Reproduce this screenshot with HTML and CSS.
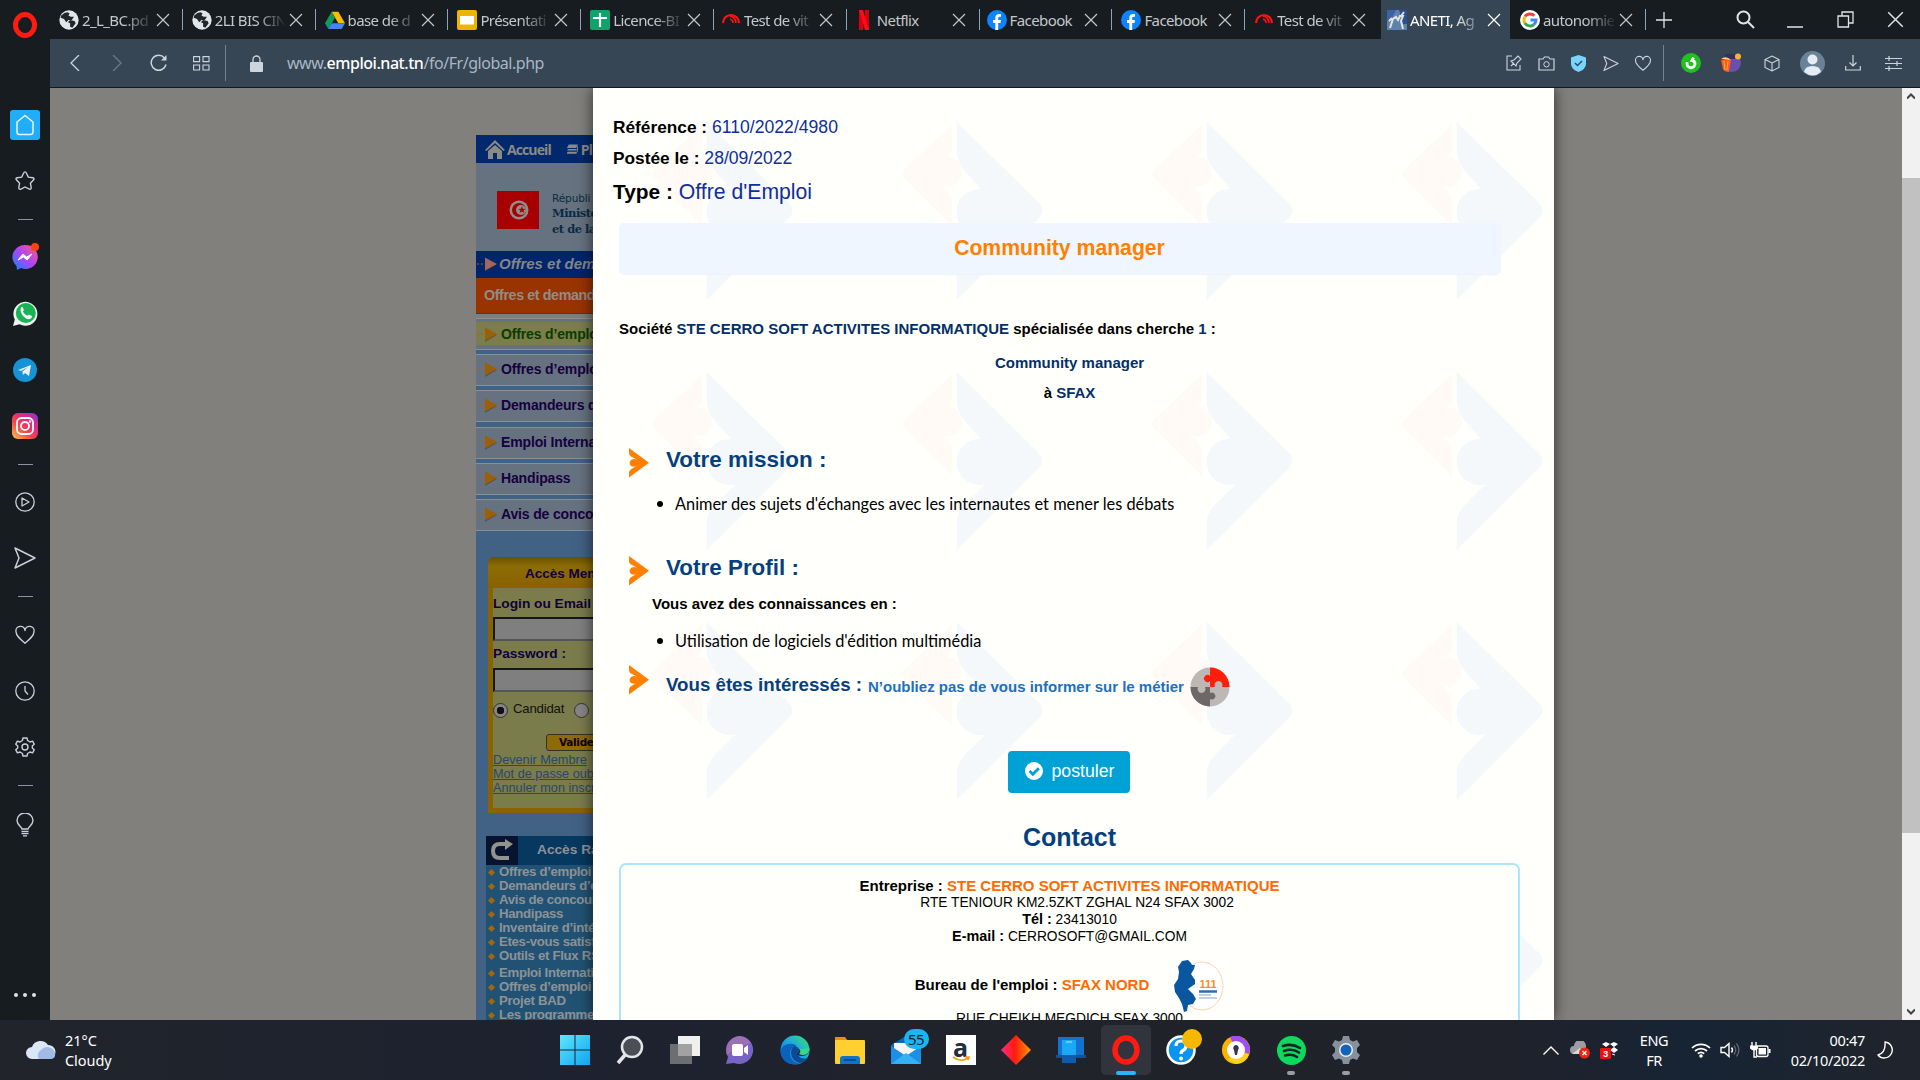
FILE: index.html
```html
<!DOCTYPE html>
<html lang="fr">
<head>
<meta charset="utf-8">
<title>ANETI</title>
<link rel="stylesheet" href="styles.css">
</head>
<body>
<svg class="defs" width="0" height="0">
  <defs>
    <symbol id="x" viewBox="0 0 14 14"><path d="M1 1l12 12M13 1L1 13" fill="none" stroke="currentColor" stroke-width="1.2"/></symbol>
    <symbol id="globe" viewBox="0 0 18 18"><circle cx="9" cy="9" r="8.7" fill="#e3e6e8"/><path d="M2 5q3-3 5.500-3l2 1-1 2 2 1 3 0-2 3-3 0-2 2-2-3-3-1zM10 9l4 1 1 2-3 4-2-1 0-3-2-1z" fill="#20262b"/></symbol>
    <symbol id="speed" viewBox="0 0 20 18"><path d="M2 14a8 8 0 1 1 16 0" fill="none" stroke="#f11" stroke-width="2.200" transform="translate(0 -2)"/><path d="M9 5a7 7 0 0 1 6 7M9 8a4 4 0 0 1 3 4" fill="none" stroke="#f11" stroke-width="1.600"/></symbol>
    <symbol id="fb" viewBox="0 0 20 20"><circle cx="10" cy="10" r="10" fill="#0a84ff"/><path d="M8.300 20v-7H6v-3h2.300V8c0-2.600 1.400-4 3.700-4l2 .2v2.500h-1.300c-1.200 0-1.500.7-1.500 1.500V10H14l-.5 3h-2.300v7z" fill="#fff"/></symbol>
    <symbol id="chev" viewBox="0 0 20 30"><path d="M0 0L20 14.700 0 29.500V24.500Q0 22.500 2 21.200L7 18.300Q2 19.500 .8 16.500 0 13.500 2.500 11.800 5 10.500 8 11.500L2 8.500Q0 7.500 0 5z" fill="#ff7f00"/></symbol>
    <symbol id="tri" viewBox="0 0 22 18"><path d="M1 9h2M5 9h2" stroke="#a5612a" stroke-width="1"/><path d="M9 4l12 6-12 7z" fill="#3c3c3c" opacity=".5"/><path d="M9 2.500l12 6.500-12 6.500z" fill="currentColor"/></symbol>
    <symbol id="send" viewBox="0 0 24 24"><path d="M2 2l20 10L2 22l4-10z" fill="none" stroke="currentColor" stroke-width="1.500" stroke-linejoin="round"/></symbol>
    <symbol id="heart" viewBox="0 0 24 22"><path d="M12 20C7 16 2 12 2 7a5 5 0 0 1 10-1 5 5 0 0 1 10 1c0 5-5 9-10 13z" fill="none" stroke="currentColor" stroke-width="1.500" stroke-linejoin="round"/></symbol>
    <linearGradient id="edge" x1="0" y1="1" x2="1" y2="0"><stop offset="0" stop-color="#0b5fc0"/><stop offset=".5" stop-color="#18a5e8"/><stop offset="1" stop-color="#3ee36b"/></linearGradient>
    <linearGradient id="msn" x1="0" y1="1" x2="1" y2="0"><stop offset="0" stop-color="#0a84ff"/><stop offset=".5" stop-color="#b044f5"/><stop offset="1" stop-color="#ff5c74"/></linearGradient>
    <linearGradient id="insta" x1="0" y1="1" x2=".9" y2="0"><stop offset="0" stop-color="#fdc84a"/><stop offset=".4" stop-color="#f5474a"/><stop offset=".7" stop-color="#e02a83"/><stop offset="1" stop-color="#8a3ac8"/></linearGradient>
    <linearGradient id="dia" x1="0" x2="1"><stop offset="0" stop-color="#ff2d8a"/><stop offset=".45" stop-color="#ff1a10"/><stop offset="1" stop-color="#ff9a00"/></linearGradient>
    <linearGradient id="win" x1="0" y1="0" x2="1" y2="1"><stop offset="0" stop-color="#5fe6ff"/><stop offset="1" stop-color="#0fa5f0"/></linearGradient>
  </defs>
</svg>

<div class="window">
  <nav class="sidebar">
    <div class="logo"><svg width="26" height="26" viewBox="0 0 26 26"><ellipse cx="13" cy="13" rx="9.500" ry="10.500" fill="none" stroke="#ff1b10" stroke-width="5"/></svg></div>
    <ul class="apps">
      <li><span class="home"><svg width="20" height="22" viewBox="0 0 20 22"><path d="M10 1.500L18 8v10q0 2.500-2.500 2.500h-11Q2 20.500 2 18V8z" fill="none" stroke="#e8f6ff" stroke-width="1.500" stroke-linejoin="round"/></svg></span></li>
      <li><svg width="22" height="22" viewBox="0 0 24 24"><path d="M12 2q1 0 1.600 1.500l2 4.300 5 .7q2 .5.800 2.200l-3.500 3.700.9 5q0 2-2 1.400L12 18.500 7.200 21q-2 .4-2-1.600l.9-5L2.600 10.700Q1.400 9 3.400 8.500l5-.7 2-4.300Q11 2 12 2z" fill="none" stroke="currentColor" stroke-width="1.500"/></svg></li>
      <li class="dash"></li>
      <li><svg width="28" height="28" viewBox="0 0 28 28"><path d="M14 2a12 12 0 1 1-4 23l-4 2-.5-4A12 12 0 0 1 14 2z" fill="url(#msn)"/><path d="M7 17l5-6 3.500 3 5.500-3-5 6-3.500-3z" fill="#fff" stroke="#fff"/><circle cx="24" cy="4" r="4" fill="#ff4112"/></svg></li>
      <li><svg width="27" height="27" viewBox="0 0 27 27"><path d="M1 26l1.800-6.500A12 12 0 1 1 7.500 24.300z" fill="#f2f2f0"/><circle cx="13.800" cy="13" r="10" fill="#17b354"/><path d="M9 7.500q1.500-1 2 .5l.8 2q-.1.900-1 1.500 1.700 3.200 4.500 4.300l1.500-1.300 3 1.500q.4 2.500-2.800 3.300C12 19 7 12 9 7.500z" fill="#fff"/></svg></li>
      <li><svg width="24" height="24" viewBox="0 0 24 24"><circle cx="12" cy="12" r="12" fill="#1593d6"/><path d="M5 12l13-5-2 11-4-3-2 2-.6-3.500L15 9l-7 4z" fill="#eee"/></svg></li>
      <li><svg width="26" height="26" viewBox="0 0 26 26"><rect width="26" height="26" rx="6" fill="url(#insta)"/><rect x="5" y="5" width="16" height="16" rx="4.500" fill="none" stroke="#fff" stroke-width="1.800"/><circle cx="13" cy="13" r="4" fill="none" stroke="#fff" stroke-width="1.800"/><circle cx="18" cy="8.500" r="1.200" fill="#fff"/></svg></li>
      <li class="dash"></li>
      <li><svg width="20" height="20" viewBox="0 0 20 20"><circle cx="10" cy="10" r="9.200" fill="none" stroke="currentColor" stroke-width="1.300"/><path d="M7 6l7 4-7 4z" fill="none" stroke="currentColor" stroke-width="1.300" stroke-linejoin="round"/></svg></li>
      <li><svg width="24" height="24"><use href="#send"/></svg></li>
      <li class="dash"></li>
      <li><svg width="22" height="20"><use href="#heart"/></svg></li>
      <li><svg width="20" height="20" viewBox="0 0 20 20"><circle cx="10" cy="10" r="9.200" fill="none" stroke="currentColor" stroke-width="1.300"/><path d="M10 5v5l3 3.500" fill="none" stroke="currentColor" stroke-width="1.300"/></svg></li>
      <li><svg width="20" height="22" viewBox="0 0 20 22"><path d="M8 2h4l.6 2.500L15 6l2.600-.8 1.600 3L17.300 10v2l1.900 1.800-1.600 3L15 16l-2.400 1.500L12 20H8l-.6-2.500L5 16l-2.600.8-1.600-3L2.700 12v-2L.8 8.200l1.600-3L5 6l2.400-1.500z" fill="none" stroke="currentColor" stroke-width="1.400" stroke-linejoin="round"/><circle cx="10" cy="11" r="3" fill="none" stroke="currentColor" stroke-width="1.400"/></svg></li>
      <li class="dash"></li>
      <li><svg width="18" height="24" viewBox="0 0 18 24"><path d="M6 16c0-2-5-4-5-8.500a8 7.500 0 0 1 16 0C17 12 12 14 12 16z" fill="none" stroke="currentColor" stroke-width="1.400"/><path d="M5.500 18.500h7M5.500 20.700h7M7 22.900h4" stroke="currentColor" stroke-width="1.300"/></svg></li>
    </ul>
    <div class="dots"><i></i><i></i><i></i></div>
  </nav>

  <div class="main">
    <header class="tabs">
      <div class="tab"><svg class="fav"><use href="#globe"/></svg><span class="t">2_L_BC.pd</span><svg class="x"><use href="#x"/></svg></div>
      <div class="tab"><svg class="fav"><use href="#globe"/></svg><span class="t">2LI BIS CIN</span><svg class="x"><use href="#x"/></svg></div>
      <div class="tab"><svg class="fav" viewBox="0 0 18 18"><path d="M6 1.500h6L18 12h-6z" fill="#fbbc04"/><path d="M6 1.500L9 7 3 17 0 12z" fill="#0f9d58"/><path d="M6 12h12l-3 5H3z" fill="#4285f4"/></svg><span class="t">base de d</span><svg class="x"><use href="#x"/></svg></div>
      <div class="tab"><svg class="fav" viewBox="0 0 20 20"><rect width="20" height="20" rx="2" fill="#f0b400"/><rect x="3" y="6" width="14" height="8.500" fill="#fff"/></svg><span class="t">Présentati</span><svg class="x"><use href="#x"/></svg></div>
      <div class="tab"><svg class="fav" viewBox="0 0 20 20"><rect width="20" height="20" rx="2" fill="#0fa36b"/><path d="M10 3v14M3 8h14" stroke="#fff" stroke-width="2.200"/></svg><span class="t">Licence-BI</span><svg class="x"><use href="#x"/></svg></div>
      <div class="tab near"><svg class="fav"><use href="#speed"/></svg><span class="t">Test de vit</span><svg class="x"><use href="#x"/></svg></div>
      <div class="tab near"><svg class="fav" viewBox="0 0 18 20"><path d="M4 0h4v20H4zM10 0h4v20h-4z" fill="#d8000f"/><path d="M4 0h4l6 20h-4z" fill="#ff0a16"/></svg><span class="t solid">Netflix</span><svg class="x"><use href="#x"/></svg></div>
      <div class="tab near"><svg class="fav"><use href="#fb"/></svg><span class="t solid">Facebook</span><svg class="x"><use href="#x"/></svg></div>
      <div class="tab"><svg class="fav"><use href="#fb"/></svg><span class="t solid">Facebook</span><svg class="x"><use href="#x"/></svg></div>
      <div class="tab wide"><svg class="fav"><use href="#speed"/></svg><span class="t">Test de vit</span><svg class="x"><use href="#x"/></svg></div>
      <div class="tab active"><svg class="fav" viewBox="0 0 20 20"><rect width="20" height="20" fill="#5b83ad"/><path d="M0 0h9l-4 8-5 3z" fill="#3a63a4"/><path d="M12 0h8v14h-4z" fill="#2a5092"/><path d="M3 18l3-9 3-2 2 3 2-4 3 0-2 5 2 8M5 8l-3 3M14 6l3-4" stroke="#e5e3dc" stroke-width="2" fill="none"/></svg><span class="t">ANETI, Ag</span><svg class="x"><use href="#x"/></svg></div>
      <div class="tab last"><svg class="fav" viewBox="0 0 20 20"><circle cx="10" cy="10" r="10" fill="#fff"/><g fill="none" stroke-width="3"><path d="M5 6.500A6 6 0 0 1 14.300 5.800" stroke="#ea4335"/><path d="M4.800 13A6 6 0 0 1 5 6.800" stroke="#fbbc05"/><path d="M13.800 14.700A6 6 0 0 1 4.900 13" stroke="#34a853"/><path d="M10.500 10H16q0 3-2.300 4.800" stroke="#4285f4"/></g></svg><span class="t">autonomie</span><svg class="x"><use href="#x"/></svg></div>
      <div class="controls">
        <svg width="16" height="16" viewBox="0 0 16 16"><path d="M8 0v16M0 8h16" stroke="currentColor" stroke-width="1.300"/></svg>
        <svg class="find" width="19" height="19" viewBox="0 0 19 19"><circle cx="7.500" cy="7.500" r="6" fill="none" stroke="currentColor" stroke-width="2"/><path d="M12 12l6 6" stroke="currentColor" stroke-width="2"/></svg>
        <svg class="min" width="16" height="16" viewBox="0 0 16 16"><path d="M0 15h16" stroke="currentColor" stroke-width="1.500"/></svg>
        <svg width="17" height="17" viewBox="0 0 17 17"><path d="M1 5h10.500v11H1zM5 5V1h11v11h-4.500" fill="none" stroke="currentColor" stroke-width="1.300"/></svg>
        <svg width="17" height="17"><use href="#x"/></svg>
      </div>
    </header>

    <div class="toolbar">
      <svg class="b1" width="10" height="16" viewBox="0 0 10 16"><path d="M9 0L1 8l8 8" fill="none" stroke="currentColor" stroke-width="1.300"/></svg>
      <svg class="b2" width="10" height="16" viewBox="0 0 10 16"><path d="M1 0l8 8-8 8" fill="none" stroke="#6b7986" stroke-width="1.300"/></svg>
      <svg class="b3" width="18" height="18" viewBox="0 0 18 18"><path d="M16 10.500A7.500 7.500 0 1 1 14.500 4" fill="none" stroke="currentColor" stroke-width="1.500"/><path d="M16.500 1v5.500H11z" fill="currentColor"/></svg>
      <svg class="b4" width="17" height="15" viewBox="0 0 17 15"><path d="M.6.600h6v5h-6zM10 .6h6v5h-6zM.6 9h6v5h-6zM10 9h6v5h-6z" fill="none" stroke="currentColor" stroke-width="1.100"/></svg>
      <i class="bar"></i>
      <svg class="lock" width="13" height="17" viewBox="0 0 13 17"><path d="M3 8V4.500a3.500 3.500 0 0 1 7 0V8" fill="none" stroke="currentColor" stroke-width="1.300"/><rect y="7" width="13" height="10" rx="1" fill="currentColor"/></svg>
      <span class="url">www.<b>emploi.nat.tn</b>/fo/Fr/global.php</span>
      <div class="tools">
        <span><svg width="16" height="16" viewBox="0 0 16 16"><path d="M6 1H1v14h13V10M5 11l3-3M5 6l5 5 1-3 4-4-3-3-4 4z" fill="none" stroke="currentColor" stroke-width="1.100"/></svg></span>
        <span><svg width="17" height="15" viewBox="0 0 17 15"><path d="M1 3h4l1.500-2h4L12 3h4v11H1z" fill="none" stroke="currentColor" stroke-width="1.200"/><circle cx="8.500" cy="8.300" r="2.700" fill="none" stroke="currentColor"/></svg></span>
        <span><svg width="15" height="17" viewBox="0 0 15 17"><path d="M7.500 0L15 2.500V9q0 5-7.500 8Q0 14 0 9V2.500z" fill="#79d3ff"/><path d="M4 8l2.500 2.500L11 6" fill="none" stroke="#2d4a60" stroke-width="1.500"/></svg></span>
        <span><svg width="18" height="17"><use href="#send"/></svg></span>
        <span><svg width="18" height="17"><use href="#heart"/></svg></span>
        <i class="bar"></i>
        <span class="w"><svg width="20" height="20" viewBox="0 0 20 20"><circle cx="10" cy="10" r="10" fill="#1fc11f"/><path d="M6 9v1.500a4 4 0 0 0 8 .5q0-3-3-3.500l1.500-3" fill="none" stroke="#fff" stroke-width="2.800"/></svg></span>
        <span class="w"><svg width="20" height="20" viewBox="0 0 20 20"><circle cx="11" cy="10" r="9" fill="#6a4fb0"/><rect x="4" y="1" width="10" height="5" fill="#34305c"/><path d="M0 7h10l-2 12q-5 0-6-3z" fill="#ff5a2a"/><path d="M3 8l1 9M7 8l-1 9" stroke="#ffb02e"/><circle cx="17" cy="3.500" r="3" fill="#ffb02e"/><path d="M0 6q5-4 10 1z" fill="#ffd27a"/></svg></span>
        <span class="w"><svg width="16" height="17" viewBox="0 0 16 17"><path d="M8 1l7 3.500v8L8 16l-7-3.500v-8zM1 4.500L8 8l7-3.500M8 8v8" fill="none" stroke="currentColor" stroke-width="1.100"/></svg></span>
        <span class="w"><svg width="25" height="25" viewBox="0 0 25 25"><circle cx="12.500" cy="12.500" r="12.500" fill="#6b8296"/><circle cx="12.500" cy="8.500" r="5" fill="#e4ecf5"/><path d="M4 21q1-6 8.500-6t8.500 6q-8 7-17 0z" fill="#e4ecf5"/></svg></span>
        <span class="w"><svg width="16" height="16" viewBox="0 0 16 16"><path d="M8 0v11M4.500 7.500L8 11l3.500-3.500M.7 11v4h14.600v-4" fill="none" stroke="currentColor" stroke-width="1.200"/></svg></span>
        <span class="w"><svg width="17" height="15" viewBox="0 0 17 15"><path d="M0 2.500h17M0 7.500h17M0 12.500h17M4 0v5M12 5v5M4 10v5" fill="none" stroke="currentColor" stroke-width="1.200"/></svg></span>
      </div>
    </div>

    <div class="view">
      <aside class="site">
        <div class="topnav"><svg width="20" height="19" viewBox="0 0 20 19"><path d="M0 10L10 0l10 10-1.500 1L10 3 1.500 11zM3 11l7-6 7 6v8h-5v-6H8v6H3z" fill="#8b8b86"/></svg><b>Accueil</b><svg class="stack" width="12" height="13" viewBox="0 0 13 13"><path d="M3 1h10l-2 4H1zM2 6h9.500v1.500H1.500zM1.500 9H11v2H1z" fill="#8b8b86"/><path d="M12.500 3v5l-1.500 3" fill="none" stroke="#8b8b86"/></svg><b>Pl</b></div>
        <div class="gov">
          <svg width="42" height="38" viewBox="0 0 42 38"><rect width="42" height="38" fill="#a80000"/><circle cx="22" cy="19" r="9.500" fill="#8e8e8a"/><circle cx="22" cy="19" r="7" fill="#a80000"/><circle cx="24" cy="19" r="5" fill="#8e8e8a"/><path d="M25 15l.8 2.700 2.700.2-2 1.500.7 2.700-2.300-1.500-2.200 1.500.7-2.700-2-1.500 2.600-.2z" fill="#a80000"/></svg>
          <p><span>Républi</span><b>Ministe</b><b>et de la</b></p>
        </div>
        <div class="ticker"><svg width="22" height="18"><use href="#tri"/></svg><i>Offres et dem</i></div>
        <div class="section">Offres et demand</div>
        <ul class="menu">
          <li class="on"><span><svg width="22" height="18"><use href="#tri"/></svg>Offres d’emplo</span></li>
          <li><span><svg width="22" height="18"><use href="#tri"/></svg>Offres d’emplo</span></li>
          <li><span><svg width="22" height="18"><use href="#tri"/></svg>Demandeurs d</span></li>
          <li><span><svg width="22" height="18"><use href="#tri"/></svg>Emploi Interna</span></li>
          <li><span><svg width="22" height="18"><use href="#tri"/></svg>Handipass</span></li>
          <li><span><svg width="22" height="18"><use href="#tri"/></svg>Avis de conco</span></li>
        </ul>
        <form class="login">
          <h4>Accès Mem</h4>
          <label>Login ou Email</label><div class="field"></div>
          <label>Password :</label><div class="field"></div>
          <div class="radios"><i class="radio on"></i><span>Candidat</span><i class="radio"></i></div>
          <div class="valid">Valide</div>
          <a>Devenir Membre</a><a>Mot de passe oub</a><a>Annuler mon inscr</a>
        </form>
        <section class="quick">
          <h4><svg width="32" height="29" viewBox="0 0 32 29"><rect width="32" height="29" fill="#08142f"/><path d="M22 8h-8q-7 0-7 7t7 7h9" fill="none" stroke="#92938c" stroke-width="4"/><path d="M19 3l8 5-8 6z" fill="#92938c"/></svg><span>Accès Ra</span></h4>
          <ul>
            <li>Offres d’emploi</li><li>Demandeurs d’e</li><li>Avis de concour</li><li>Handipass</li><li>Inventaire d’inté</li><li>Etes-vous satisf</li><li>Outils et Flux RS</li><li class="gap">Emploi Internati</li><li>Offres d’emploi</li><li>Projet BAD</li><li>Les programme</li>
          </ul>
        </section>
      </aside>

      <article class="modal">
        <p class="meta ref"><b>Référence :</b> <span>6110/2022/4980</span></p>
        <p class="meta date"><b>Postée le :</b> <span>28/09/2022</span></p>
        <p class="meta type"><b>Type :</b> <span>Offre d'Emploi</span></p>
        <h1>Community manager</h1>
        <p class="line company">Société <em>STE CERRO SOFT ACTIVITES INFORMATIQUE</em> spécialisée dans cherche <em>1</em> :</p>
        <p class="line job"><em>Community manager</em></p>
        <p class="line city">à <em>SFAX</em></p>
        <h2 class="mission"><svg width="20" height="30"><use href="#chev"/></svg><span>Votre mission :</span></h2>
        <p class="item i1">Animer des sujets d'échanges avec les internautes et mener les débats</p>
        <h2 class="profil"><svg width="20" height="30"><use href="#chev"/></svg><span>Votre Profil :</span></h2>
        <p class="line know">Vous avez des connaissances en :</p>
        <p class="item i2">Utilisation de logiciels d'édition multimédia</p>
        <h3><svg class="c" width="20" height="30"><use href="#chev"/></svg><span>Vous êtes intéressés :</span><small>N’oubliez pas de vous informer sur le métier</small>
          <svg width="40" height="40" viewBox="0 0 40 40"><circle cx="20" cy="20" r="19.500" fill="#bdb7b6"/><path d="M20 .5A19.500 19.500 0 0 1 39.500 20H32a4 4 0 1 0-7 0h-5v-6a3.500 3.500 0 1 1 0-5z" fill="#ff1e0a"/><path d="M.5 20A19.500 19.500 0 0 0 20 39.500V32a3.500 3.500 0 1 0 0-6v-6h-5a4 4 0 1 1-7 0z" fill="#6b6867"/></svg></h3>
        <div class="btnrow"><div class="btn"><svg width="18" height="18" viewBox="0 0 18 18"><circle cx="9" cy="9" r="9" fill="#fff"/><path d="M4.500 9l3.300 3.300 6-6" fill="none" stroke="#00a2d6" stroke-width="2.800"/></svg>postuler</div></div>
        <h2 class="contact">Contact</h2>
        <section class="card">
          <p class="ent"><b>Entreprise : <em>STE CERRO SOFT ACTIVITES INFORMATIQUE</em></b></p>
          <p class="addr">RTE TENIOUR KM2.5ZKT ZGHAL N24 SFAX 3002</p>
          <p class="tel"><b>Tél :</b> 23413010</p>
          <p class="mail"><b>E-mail :</b> CERROSOFT@GMAIL.COM</p>
          <div class="office"><b>Bureau de l'emploi : <em>SFAX NORD</em></b>
            <svg width="50" height="52" viewBox="0 0 50 52"><ellipse cx="28" cy="26" rx="21" ry="24" fill="#fff" stroke="#ffd3b0"/><path d="M8 1l6-1 3 3 1 2 3 0-1 4-3 5 4 6 0 4-7 5 5 5 3 5-3 5-5 1-1 6-3 1-2-8-3-6-4-6-1-7 4-6 1-7-1-5z" fill="#0a569f"/><text class="count" x="25.500" y="28">111</text><path d="M25 31.500h18" stroke="#2e6db0" stroke-width="2.500"/><path d="M25 35h12M25 38h18" stroke="#a9c4de" stroke-width="1.500"/></svg></div>
          <p class="rue">RUE CHEIKH MEGDICH SFAX 3000</p>
        </section>
      </article>

      <div class="scroll"><svg width="8" height="7" viewBox="0 0 8 7"><path d="M0 5.500l4-4 4 4" fill="none" stroke="#444" stroke-width="2"/></svg><i></i><svg width="8" height="7" viewBox="0 0 8 7"><path d="M0 1.500l4 4 4-4" fill="none" stroke="#444" stroke-width="2"/></svg></div>
    </div>
  </div>
</div>

<footer class="taskbar">
  <div class="weather"><svg width="32" height="22" viewBox="0 0 32 22"><path d="M7 20a6 6 0 0 1 0-12 9 9 0 0 1 16-2 7 7 0 0 1 1 14z" fill="#dde6f5"/><path d="M14 20a6 6 0 0 1 2-9 8 8 0 0 1 14 3q1 6-5 6z" fill="#9fbbe6"/></svg><p>21°C<br>Cloudy</p></div>
  <div class="icons">
    <span><svg width="30" height="30" viewBox="0 0 30 30"><path d="M0 0h14.500v14.500H0zM15.500 0H30v14.500H15.500zM0 15.500h14.500V30H0zM15.500 15.500H30V30H15.500z" fill="url(#win)"/></svg></span>
    <span><svg width="28" height="30" viewBox="0 0 28 30"><circle cx="16" cy="12" r="10" fill="#4b4e54" stroke="#e3e5e8" stroke-width="2.500"/><path d="M9 20l-7 8" stroke="#e3e5e8" stroke-width="3.500"/></svg></span>
    <span><svg width="30" height="30" viewBox="0 0 30 30"><rect x="8" y="1" width="22" height="20" fill="#f0f0ee"/><rect y="9" width="22" height="20" fill="#888" opacity=".75"/></svg></span>
    <span><svg width="30" height="30" viewBox="0 0 30 30"><path d="M15 1a14 14 0 1 1-6 27l-8 1 2-7A14 14 0 0 1 15 1z" fill="#7864c4"/><path d="M15 1a14 14 0 0 0-13 19q9-8 24-12A14 14 0 0 0 15 1z" fill="#b47aa8" opacity=".6"/><rect x="7" y="9" width="11" height="12" rx="2" fill="#fff"/><path d="M19 13l4-3v10l-4-3z" fill="#fff"/></svg></span>
    <span><svg width="30" height="30" viewBox="0 0 30 30"><circle cx="15" cy="15" r="14.500" fill="url(#edge)"/><path d="M.5 17A10 9 0 0 1 17 11Q10 12 10 19 11 28 20 28.500 3 32 .5 17z" fill="#0b62bd"/><path d="M18 20q2-2 1.500-5-1-3-4.500-4-4 2-4 7 1 8 9 10 5-1 8-5-7 2-10-3z" fill="#0d4a96"/><path d="M17 19.500q2.500-2 2-5 6 1 10 2-1 3-4 4-5 1.500-8-1z" fill="#1a2238" opacity=".9"/><path d="M20 14q1 3-1 5 4 2 8 0 3-3 2.500-6z" fill="#35d98c"/></svg></span>
    <span><svg width="30" height="28" viewBox="0 0 30 28"><path d="M0 1h10l3 4h-13z" fill="#d99708"/><rect y="4" width="30" height="24" rx="1" fill="#ffd02f"/><path d="M5 28v-5q0-3 3-3h14q3 0 3 3v5z" fill="#1274c9"/><path d="M9 24h12" stroke="#0a4f92" stroke-width="2"/></svg></span>
    <span class="mailapp"><svg width="30" height="30" viewBox="0 0 30 30"><path d="M0 10L15 1l15 9v19H0z" fill="#0f67b4"/><path d="M3 8h24v8L15 24 3 16z" fill="#f2f4f6"/><path d="M0 11l15 10 15-10v18H0z" fill="#1c8fe6"/><path d="M0 29l15-11 15 11z" fill="#34b0f5"/></svg><em>55</em></span>
    <span><i class="amz">a<svg width="18" height="6" viewBox="0 0 18 6"><path d="M1 1q8 6 15 1M13 1l4 0-1 3" fill="none" stroke="#f90" stroke-width="1.600"/></svg></i></span>
    <span><svg width="30" height="30" viewBox="0 0 30 30"><path d="M15 0l15 15-15 15L0 15z" fill="url(#dia)"/></svg></span>
    <span><svg width="30" height="28" viewBox="0 0 30 28"><rect x="2" y="1" width="26" height="20" fill="#1272d0"/><path d="M0 19h30v3H0z" fill="#0a549e"/><rect x="6" y="4" width="14" height="23" rx="1" fill="#1ba8f4"/><path d="M6 19h14v8H6z" fill="#0d5cae"/><path d="M10 6h6" stroke="#bfeaff"/></svg></span>
    <span class="cur"><svg width="30" height="30" viewBox="0 0 30 30"><ellipse cx="15" cy="15" rx="11" ry="12" fill="none" stroke="#ff1b10" stroke-width="5.500"/></svg></span>
    <span class="help"><svg width="30" height="30" viewBox="0 0 30 30"><circle cx="15" cy="15" r="13.500" fill="#0a95f0" stroke="#fff" stroke-width="2.500"/><path d="M10 11q0-5 5-5t5 5q0 3-3 4.500-2 1-2 3.500" fill="none" stroke="#fff" stroke-width="3.200"/><circle cx="15" cy="23.500" r="2" fill="#fff"/></svg></span>
    <span><svg width="28" height="28" viewBox="0 0 28 28"><circle cx="14" cy="14" r="14" fill="#ffb300"/><path d="M8 1A14 14 0 0 1 27 18L14 14z" fill="#a04ff0"/><path d="M27 18A14 14 0 0 1 14 28l-8-4 8-8z" fill="#ffd21e"/><circle cx="14" cy="14" r="9" fill="#fff"/><path d="M14 9a3 3 0 0 1 2 5l-1 5h-2l-1-5a3 3 0 0 1 2-5z" fill="#30364f"/></svg></span>
    <span class="run"><svg width="29" height="29" viewBox="0 0 29 29"><circle cx="14.500" cy="14.500" r="14.500" fill="#0bda5c"/><path d="M6 10q9-3 17 2M7 15q8-3 15 1.500M8 19.500q7-2 12 1.500" fill="none" stroke="#14202a" stroke-width="2.600" stroke-linecap="round"/></svg></span>
    <span class="run"><svg width="30" height="30" viewBox="0 0 30 30"><path d="M12 1h6l1 4 3 1.500L26 5l3 5-3 3v4l3 3-3 5-4-1.500L19 25l-1 4h-6l-1-4-3-1.500L4 25l-3-5 3-3v-4l-3-3 3-5 4 1.500L11 5z" fill="#85919c"/><circle cx="15" cy="15" r="7" fill="#e9eef2"/><circle cx="15" cy="15" r="5.500" fill="#1563b8"/></svg></span>
  </div>
  <div class="tray">
    <svg class="up" width="16" height="9" viewBox="0 0 16 9"><path d="M.5 8.500L8 1l7.500 7.500" fill="none" stroke="currentColor" stroke-width="1.400"/></svg>
    <svg class="od" width="21" height="18" viewBox="0 0 21 18"><path d="M4 13a4 4 0 0 1 0-8 6 6 0 0 1 12 0v8z" fill="#9c9ea2"/><path d="M2 13l8-6 6 6z" fill="#d9dadc"/><circle cx="14.500" cy="12" r="5.500" fill="#f5220f"/><path d="M12.500 10l4 4M16.500 10l-4 4" stroke="#fff" stroke-width="1.400"/></svg>
    <svg class="db" width="19" height="19" viewBox="0 0 19 19"><path d="M6 1l4 2-4 3-4-3zM14 1l4 2-4 3-4-3zM14 6l4 3-4 3-4-3z" fill="#fff"/><path d="M12 13l3 1" stroke="#fff"/><rect y="7" width="11" height="11" rx="1" fill="#ee1010"/><text class="n" x="3" y="16">3</text></svg>
    <p class="lang">ENG<br>FR</p>
    <svg class="wifi" width="20" height="16" viewBox="0 0 20 16"><path d="M1 6a13 13 0 0 1 18 0M4 9a9 9 0 0 1 12 0M6.800 11.700a5 5 0 0 1 6.400 0" fill="none" stroke="currentColor" stroke-width="1.700"/><circle cx="10" cy="14" r="1.800" fill="currentColor"/></svg>
    <svg class="vol" width="20" height="16" viewBox="0 0 20 16"><path d="M1 5.500h3.500L9 1.500v13l-4.500-4H1z" fill="none" stroke="currentColor" stroke-width="1.400"/><path d="M11.500 5.500q2 2.500 0 5" fill="none" stroke="currentColor" stroke-width="1.400"/><path d="M14 3.500q3.500 4.500 0 9M16.500 1.500q5 6.500 0 13" fill="none" stroke="#5d6672" stroke-width="1.300"/></svg>
    <svg class="bat" width="21" height="16" viewBox="0 0 21 16"><path d="M2 0v4M6 0v4M4 7v8h3" fill="none" stroke="currentColor" stroke-width="1.400"/><path d="M0 3.500h8v3q-4 4-8 0z" fill="currentColor"/><rect x="6.500" y="4" width="11.500" height="10.500" rx="2" fill="none" stroke="currentColor" stroke-width="1.300"/><rect x="8.500" y="6" width="7.500" height="6.500" fill="currentColor"/><path d="M19.500 7v4" stroke="currentColor" stroke-width="2"/></svg>
    <p class="clock">00:47<br>02/10/2022</p>
    <svg class="moon" width="17" height="18" viewBox="0 0 17 18"><path d="M8 1a8 8 0 1 1-7 13q8-2 7-13z" fill="none" stroke="currentColor" stroke-width="1.400" stroke-linejoin="round"/></svg>
  </div>
</footer>
</body>
</html>
```
FILE: styles.css
```css
* { box-sizing: border-box; }
body { margin: 0; width: 1920px; height: 1080px; overflow: hidden; background: #171c20; font-family: "Liberation Sans", Arial, sans-serif; }
p, h1, h2, h3, h4, ul { margin: 0; padding: 0; }
ul { list-style: none; }
em { font-style: normal; }
svg { display: block; flex: none; }
.defs { height: 0; float: left; }

.window { display: grid; grid-template-columns: 50px 1870px; height: 1020px; }
.main { display: grid; grid-template-rows: 39px 49px 932px; min-width: 0; }

/* Sidebar */
.sidebar { display: flex; flex-direction: column; background: #171c20; color: #c9d0d6; }
.logo { height: 97px; padding: 12px 0 0 12px; }
.apps li { height: 56.200px; display: flex; align-items: center; justify-content: center; }
.apps .dash { height: 20px; }
.apps li:last-child { padding-top: 3px; }
.dash::before { content: ""; width: 15px; height: 1px; background: #8296a8; }
.home { width: 30px; height: 30px; border-radius: 3px; background: #20aefb; display: grid; place-items: center; }
.dots { margin: auto 0 23px; display: flex; gap: 5px; justify-content: center; }
.dots i { width: 4px; height: 4px; border-radius: 50%; background: #dfe3e6; }

/* Tabs */
.tabs { display: flex; background: #171c20; color: #c3c8cb; font: 15px "Noto Sans", sans-serif; }
.tab { width: 132.800px; flex: none; display: flex; align-items: center; padding: 0 13px 0 9px; background: linear-gradient(#8fa3b5, #8fa3b5) right top 9px / 1px 21px no-repeat; }
.tab.near { padding: 0 14px 0 7px; }
.tab.wide { width: 135.800px; background: none; padding-right: 15px; }
.tab.active { width: 129px; background: #364655; color: #fff; padding: 0 9px 0 6px; }
.tab.last { width: 136px; padding-left: 10px; }
.fav { width: 20px; height: 20px; }
.t { flex: 1; min-width: 0; margin: 0 5px 0 3px; letter-spacing: -.6px; white-space: nowrap; overflow: hidden; -webkit-mask-image: linear-gradient(90deg, #000 60%, rgba(0,0,0,.1)); mask-image: linear-gradient(90deg, #000 60%, rgba(0,0,0,.1)); }
.t.solid { -webkit-mask-image: none; mask-image: none; margin-right: 2px; }
.x { width: 14px; height: 14px; }
.controls { display: flex; align-items: center; padding-left: 10px; color: #e1e4e6; }
.find { margin: 0 32px 0 64px; }
.min { margin-right: 34px; }
.controls svg:nth-child(4) { margin-right: 33px; }

/* Address bar */
.toolbar { display: flex; align-items: center; background: #364655; border-bottom: 1px solid #14181c; color: #cdd5dc; padding-left: 20px; }
.b2 { margin-left: 32px; }
.b3 { margin-left: 28px; }
.b4 { margin-left: 25px; }
.bar { width: 1px; height: 36px; background: #74828e; }
.toolbar > .bar { margin-left: 15px; }
.lock { margin-left: 24px; }
.url { margin-left: 24px; font: 16px "Noto Sans", sans-serif; letter-spacing: -.46px; color: #a9b7c4; }
.url b { font-weight: 500; color: #fff; }
.tools { margin-left: auto; display: flex; align-items: center; padding-right: 6px; }
.tools span { width: 32.300px; display: grid; place-items: center; }
.tools .w { width: 40.600px; }
.tools .bar { margin: 0 6px 0 4px; }

/* Web page */
.view { display: grid; grid-template-columns: 426px 117px 961px 348px 18px; background: #81807d; overflow: hidden; }
.site { grid-column: 2; margin-top: 47px; overflow: hidden; background: #416185; white-space: nowrap; height: 885px; }
.topnav { display: flex; align-items: center; height: 28px; padding-left: 9px; background: #01286c; color: #8b8b86; font-size: 14px; }
.topnav b { margin-left: 2px; font: bold 14px "Open Sans", sans-serif; letter-spacing: -.9px; }
.topnav .stack { margin-left: 15px; }
.topnav .stack + b { margin-left: 3px; }
.gov { display: flex; height: 88px; background: #66727f; padding: 28px 0 0 21px; }
.gov p { margin-left: 13px; font-family: "DejaVu Serif", serif; font-size: 11.500px; line-height: 16px; letter-spacing: -.5px; color: #0b2b45; }
.gov span { display: block; font: 10.500px/14px "DejaVu Sans", sans-serif; letter-spacing: -.1px; }
.gov b { display: block; }
.ticker { display: flex; align-items: center; height: 27px; padding-bottom: 2px; background: #00256b; color: #a0675c; font-weight: bold; font-size: 15px; }
.ticker i { color: #83858e; margin-left: 1px; }
.section { height: 36px; line-height: 35px; padding-left: 8px; background: #993300; border-bottom: 1px solid #1c4670; color: #8f8e89; font-weight: bold; font-size: 14.300px; letter-spacing: -.4px; }
.menu { border-top: 4px solid #7b7f80; }
.menu li { height: 36.200px; padding: 0 0 5px; background: linear-gradient(#8a9094, #8a9094) 0 0 / 100% 1px no-repeat, linear-gradient(#8a9094, #8a9094) 0 31px / 100% 1px no-repeat, linear-gradient(#66727f, #66727f) 0 0 / 100% 31px no-repeat; color: #170040; font-weight: bold; font-size: 14px; letter-spacing: -.15px; }
.menu span { display: flex; align-items: center; height: 30px; }
.menu svg { margin-right: 3px; color: #9c5f06; }
.menu .on { padding-top: .1px; }
.menu .on span { height: 23px; margin-top: 4px; background: #7b7d4b; color: #0a3c00; }
.login { display: block; margin: 22px -20px 0 12px; height: 256px; border: 5px solid #8a6300; border-top: 0; border-radius: 7px 0 0 0; background: #7a7c4c; color: #12003c; }
.login h4 { height: 31px; line-height: 33px; margin-left: -5px; padding-left: 37px; border-radius: 6px 0 0 0; background: linear-gradient(#6b5000, #8b6c05 30%, #8a6200); font-size: 13.500px; }
.login label { display: block; height: 29px; line-height: 31px; font-weight: bold; font-size: 13.700px; }
.field { height: 24px; border: 2px solid #15151a; border-bottom-color: #555; background: #7f7f7f; }
.field + label { height: 27px; line-height: 26px; }
.radios { display: flex; align-items: center; height: 37px; font-size: 13.200px; letter-spacing: -.2px; color: #111; }
.radios span { width: 61px; margin-left: 5px; margin-top: -4px; }
.radio { flex: none; width: 15px; height: 15px; border: 1px solid #333; border-radius: 50%; background: #858585; }
.radio.on { background: radial-gradient(#111 3.500px, #858585 4px); }
.valid { width: 90px; height: 17px; margin: 5px 0 2px 53px; padding-left: 12px; border: 1px solid #332; border-radius: 3px; background: #8d6c05; color: #100; font: bold 10.500px/15px "DejaVu Sans", sans-serif; letter-spacing: -.3px; }
.login a { display: block; height: 14px; line-height: 14px; font-size: 12.700px; text-decoration: underline; color: #2c4669; }
.quick { margin: 23px -10px 0 10px; background: #215274; height: 190px; color: #8d9296; font-weight: bold; }
.quick h4 { display: flex; height: 29px; line-height: 28px; background: #073860; font-size: 13.700px; }
.quick h4 span { margin-left: 19px; }
.quick ul { margin-top: -1px; }
.quick li { display: flex; align-items: center; height: 14px; font-size: 13.200px; letter-spacing: -.3px; }
.quick li::before { content: ""; flex: none; width: 5px; height: 5px; margin: 3px 5px 0 3px; transform: rotate(45deg); background: #a2660d; }
.quick .gap { margin-top: 3px; }

/* Offer dialog */
.modal { position: relative; height: 932px; padding: 29px 34px 0 20px; clip-path: inset(0 -20px 0 -20px); box-shadow: 0 0 14px rgba(0,0,0,.65);
  background: #fffffb url("data:image/svg+xml,%3Csvg xmlns='http://www.w3.org/2000/svg' width='250' height='250'%3E%3Cpath d='M50 2V24Q50 33 42 37H37A15 15 0 1 1 40 64Q50 70 50 80V104L2 56Q-1 52 2 48Z' fill='%23fffaf5'/%3E%3Cpath d='M54.700 0L138 82Q143 89 138 95L54.700 178V150Q55 142 62 134L84 112A23 23 0 1 1 79 67L62 48Q54.700 39 54.700 28Z' fill='%23f4f8fb'/%3E%3C/svg%3E") 59px 34px; }
.meta { font-size: 17.600px; line-height: 20px; color: #000; white-space: nowrap; }
.meta span { color: #0f2f9c; }
.meta b { font-size: 17.300px; }
.date { margin-top: 11px; }
.type { font-size: 21.200px; line-height: 24px; margin-top: 12px; }
.type b { font-size: 20.900px; }
.modal h1 { margin: 19px 0 0 6px; width: 882px; height: 51px; line-height: 50px; padding-right: 1px; border-radius: 5px; background: #eff6ff; box-shadow: 0 1px 1px #eef2f4; text-align: center; font-size: 21.200px; color: #ff7f00; }
.line { margin-left: 6px; font-size: 15px; line-height: 20px; font-weight: bold; color: #000; white-space: nowrap; }
.line em { color: #042f68; }
.company { margin-top: 45px; }
.job, .city { text-align: center; }
.job { margin-top: 14px; }
.city { margin-top: 10px; }
.modal h2 { display: flex; height: 30px; line-height: 30px; font-size: 22.450px; color: #063f7f; padding-left: 16px; }
.modal h2 svg { margin: 3px 17px 0 0; }
.mission { margin-top: 42px; }
.item { display: flex; align-items: center; height: 20px; padding-left: 44px; font: 16.340px/20px Lato, sans-serif; color: #000; white-space: nowrap; }
.item::before { content: ""; width: 6px; height: 6px; border-radius: 50%; background: #000; margin-right: 12px; }
.i1 { margin-top: 19px; }
.profil { margin-top: 39px; }
.know { margin: 11px 0 0 39px; }
.i2 { margin-top: 17px; }
.modal h3 { display: flex; align-items: center; height: 44px; margin-top: 14px; padding-left: 16px; font-size: 18.700px; color: #063f7f; white-space: nowrap; }
.modal h3 .c { margin: -15px 17px 0 0; }
.modal h3 span { margin-top: -4px; }
.modal h3 small { margin: -2px 6px 0 6px; font-size: 15px; color: #1c6fc1; }
.btnrow { display: flex; justify-content: center; margin: 42px 0 0 4px; }
.btn { display: flex; align-items: center; gap: 9px; width: 122px; height: 42px; padding: 0 0 2px 17px; border-radius: 4px; background: #00a2d6; color: #fff; font-size: 17.700px; }
.modal .contact { display: block; margin-top: 29px; padding: 0 0 0 6px; text-align: center; font-size: 25px; }
.card { margin: 11px 0 0 6px; height: 180px; padding-top: 12px; border: 2px solid #a8e6f8; border-radius: 7px; background: #fffffb; text-align: center; font-size: 13.750px; line-height: 17px; color: #000; }
.card em { color: #ff6a00; }
.card b { font-size: 14.400px; }
.card .ent b, .card .office b { font-size: 15px; }
.card .addr { margin-top: -1px; padding-left: 15px; }
.count { font: bold 11px "Liberation Sans", sans-serif; fill: #ff8a20; }
.office { display: flex; justify-content: center; align-items: center; gap: 25px; margin-top: 15px; font-size: 15px; height: 51px; }
.office b { margin-top: -2px; }
.card .rue { margin-top: -1px; }

.scroll { grid-column: 5; display: flex; flex-direction: column; align-items: center; justify-content: space-between; background: #f1f1f1; padding: 5px 0; }
.scroll i { width: 18px; height: 655px; margin: 78px 0 auto; background: #c1c1c1; }

/* Taskbar */
.taskbar { display: flex; height: 60px; align-items: center; color: #fff; background: linear-gradient(90deg, #21242b, #1d2230 30%, #21232b 50%, #20222b 78%, #172434 88%, #20242c); font: 15px/20px "Noto Sans", sans-serif; }
.weather { display: flex; align-items: center; width: 550px; padding-left: 25px; gap: 8px; font-size: 14.500px; letter-spacing: -.05px; }
.weather p { margin-top: -1px; }
.icons { display: flex; }
.icons span { position: relative; width: 50px; height: 50px; margin-right: 5.100px; display: grid; place-items: center; }
.icons .cur { background: #31343d; border-radius: 5px; }
.cur::after, .run::after { content: ""; position: absolute; bottom: 0; width: 20px; height: 4px; border-radius: 2px; background: #27b6f8; }
.run::after { width: 8px; background: #9b9da2; }
.mailapp em { position: absolute; right: 2px; top: 4px; width: 25px; height: 20px; border-radius: 10px; background: #1cb4f4; color: #10222e; text-align: center; line-height: 20px; letter-spacing: -.5px; }
.help::after { content: ""; position: absolute; right: 4px; top: 4px; width: 20px; height: 20px; border-radius: 50%; background: #f6b900; }
.amz { width: 30px; height: 30px; background: #fff; color: #232f3e; font: bold 25px/18px "Open Sans", sans-serif; display: grid; justify-items: center; align-content: center; }
.tray { display: flex; align-items: center; margin-left: auto; padding-right: 26px; }
.od { margin-left: 11px; }
.db { margin-left: 9px; }
.n { font: bold 9.500px "Liberation Sans", sans-serif; fill: #fff; }
.lang { width: 34px; margin: 0 0 0 18px; text-align: center; font-size: 14.500px; letter-spacing: -.4px; }
.wifi { margin-left: 20px; }
.vol { margin-left: 9px; }
.bat { margin-left: 10px; }
.clock { width: 80px; margin: -1px 12px 0 14px; text-align: right; white-space: nowrap; font-size: 14.500px; letter-spacing: -.3px; }
```
